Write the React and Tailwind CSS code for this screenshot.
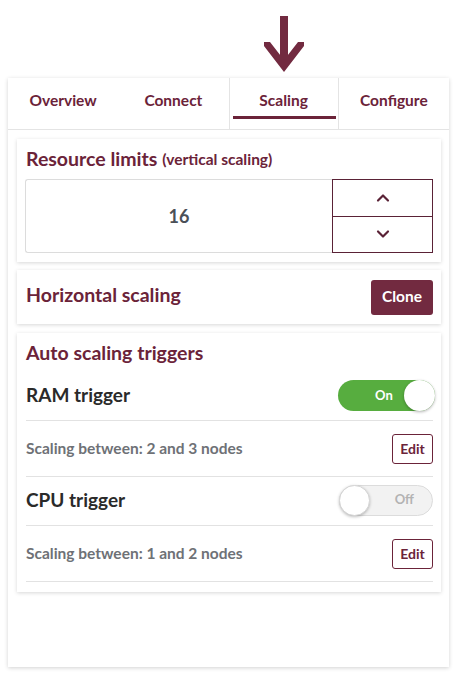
import React from "react";
import { ChevronUp, ChevronDown } from "lucide-react";

const maroon = "text-[#6b2339]";

function Toggle({ on }) {
  if (on) {
    return (
      <div className="relative w-[97px] h-[31px] rounded-full bg-[#57ad3f] flex items-center">
        <span className="absolute left-[37px] text-[13px] font-bold text-white">On</span>
        <div className="absolute right-0 top-0 w-[31px] h-[31px] rounded-full bg-white shadow-[0_1px_3px_rgba(0,0,0,0.3)]" />
      </div>
    );
  }
  return (
    <div className="relative w-[94px] h-[31px] rounded-full bg-[#f2f2f2] border border-[#dcdcdc] flex items-center">
      <span className="absolute right-[18px] text-[13px] font-bold text-[#b3b3b3]">Off</span>
      <div className="absolute left-[-1px] top-[-1px] w-[31px] h-[31px] rounded-full bg-white border border-[#d6d6d6] shadow-[0_1px_3px_rgba(0,0,0,0.25)]" />
    </div>
  );
}

function EditBtn() {
  return (
    <button className="w-[41px] h-[30px] rounded-[3px] border border-[#6b2339] bg-white text-[14px] font-bold text-[#6b2339] flex items-center justify-center">
      Edit
    </button>
  );
}

export default function App() {
  return (
    <div
      className="w-[458px] h-[691px] bg-white overflow-hidden"
      style={{ fontFamily: "Lato, 'Open Sans', sans-serif" }}
    >
      <div className="h-[78px] pl-[264px] pt-[16px]">
        <svg width="40" height="57" viewBox="0 0 40 57">
          <rect x="16" y="0" width="8" height="50" fill="#722a40" />
          <polygon points="0,26 6,26 20,44 34,26 40,26 40,30 20,56 0,30" fill="#722a40" />
        </svg>
      </div>
      <div className="ml-[8px] w-[441px] h-[589px] bg-white shadow-[0_1px_4px_rgba(0,0,0,0.18)] flex flex-col">
        <div className="grid grid-cols-4 h-[52px] border-b border-[#e4e4e4]">
          <div className={`flex items-center justify-center pb-[5px] text-[15.5px] font-bold ${maroon}`}>Overview</div>
          <div className={`flex items-center justify-center pb-[5px] text-[15.5px] font-bold ${maroon}`}>Connect</div>
          <div className={`relative flex items-center justify-center pb-[5px] text-[15.5px] font-bold ${maroon} border-l border-r border-[#e4e4e4]`}>
            Scaling
            <div className="absolute left-[3px] right-[2px] bottom-[10px] h-[3px] bg-[#6b2339]" />
          </div>
          <div className={`flex items-center justify-center pb-[5px] text-[15.5px] font-bold ${maroon}`}>Configure</div>
        </div>

        <div className="pl-[9px] pr-[8px] pt-[9px] flex flex-col gap-[8px]">
          {/* Resource limits */}
          <div className="bg-white shadow-[0_1px_4px_rgba(0,0,0,0.16)] pl-[8px] pr-[8px] pb-[9px]">
            <div className={`h-[40px] flex items-center font-bold ${maroon}`}>
              <span className="text-[19.5px] ml-[1px]">Resource limits</span>
              <span className="text-[15.5px] ml-[5px] mt-[2px]">(vertical scaling)</span>
            </div>
            <div className="flex h-[74px]">
              <div className="flex-1 border border-r-0 border-[#dcdcdc] rounded-l-[3px] flex items-center justify-center text-[18px] font-bold text-[#4b5057]">
                16
              </div>
              <div className="w-[101px] flex flex-col border border-[#5a2236]">
                <div className="flex-1 flex items-center justify-center border-b border-[#5a2236] text-[#5a2236]">
                  <ChevronUp size={20} strokeWidth={2.6} />
                </div>
                <div className="flex-1 flex items-center justify-center text-[#5a2236]">
                  <ChevronDown size={20} strokeWidth={2.6} />
                </div>
              </div>
            </div>
          </div>

          {/* Horizontal scaling */}
          <div className="h-[54px] bg-white shadow-[0_1px_4px_rgba(0,0,0,0.16)] pl-[9px] pr-[8px] flex items-center justify-between">
            <span className={`text-[19.5px] font-bold mb-[5px] ${maroon}`}>Horizontal scaling</span>
            <button className="w-[62px] h-[35px] rounded-[3px] bg-[#722a40] text-white text-[15.5px] font-bold">
              Clone
            </button>
          </div>

          {/* Auto scaling triggers */}
          <div className="bg-white shadow-[0_1px_4px_rgba(0,0,0,0.16)] pl-[9px] pr-[8px] pb-[10px] mt-[1px]">
            <div className={`h-[40px] flex items-center text-[19.5px] font-bold ${maroon}`}>Auto scaling triggers</div>
            <div className="h-[48px] flex items-center justify-between border-b border-[#e2e2e2] pb-[2px]">
              <span className="text-[19px] font-bold text-[#2a2a2a]">RAM trigger</span>
              <div className="mr-[-2px]"><Toggle on /></div>
            </div>
            <div className="h-[56px] flex items-center justify-between border-b border-[#e2e2e2]">
              <span className="text-[15.5px] font-bold text-[#6e7176]">Scaling between: 2 and 3 nodes</span>
              <EditBtn />
            </div>
            <div className="h-[49px] flex items-center justify-between border-b border-[#e2e2e2] pb-[2px]">
              <span className="text-[19px] font-bold text-[#2a2a2a]">CPU trigger</span>
              <Toggle on={false} />
            </div>
            <div className="h-[56px] flex items-center justify-between border-b border-[#e2e2e2]">
              <span className="text-[15.5px] font-bold text-[#6e7176]">Scaling between: 1 and 2 nodes</span>
              <EditBtn />
            </div>
          </div>
        </div>
      </div>
    </div>
  );
}
